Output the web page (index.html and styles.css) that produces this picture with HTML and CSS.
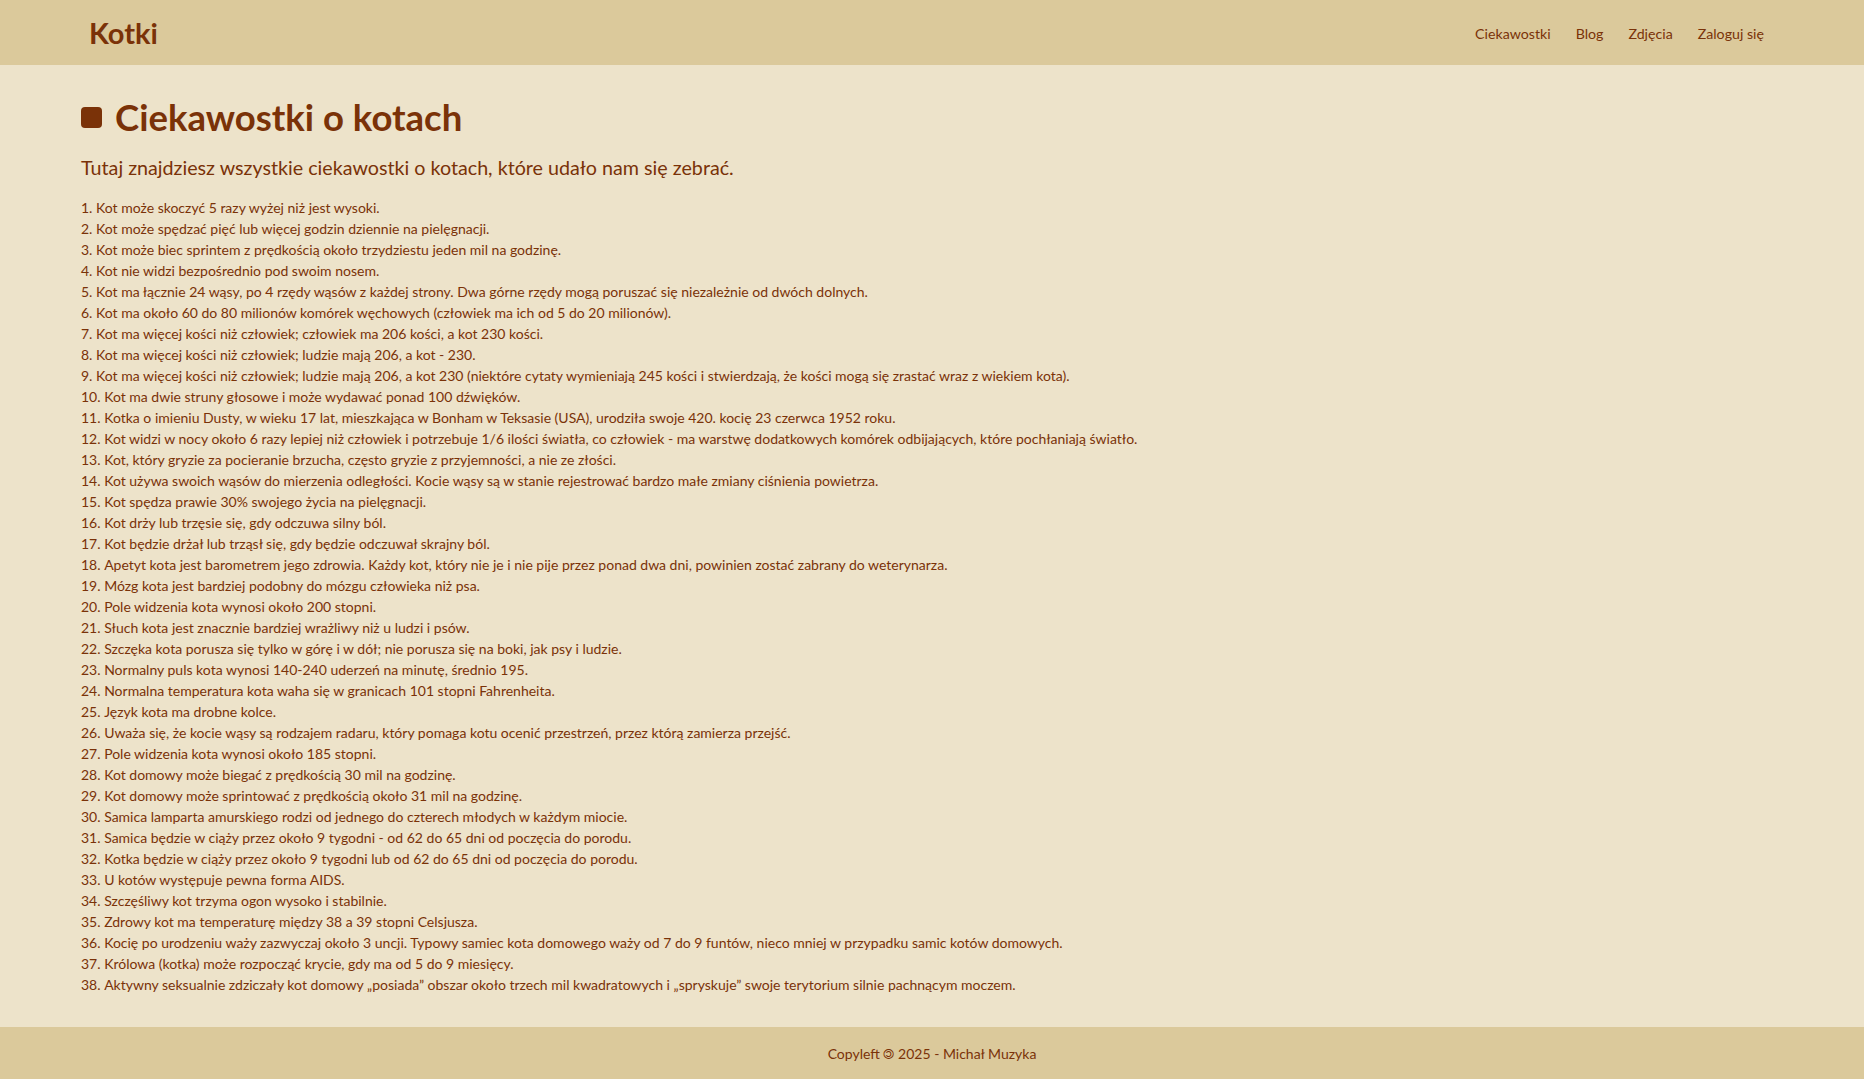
FILE: index.html
```html
<!DOCTYPE html>
<html lang="pl">
<head>
<meta charset="utf-8">
<title>Kotki - Ciekawostki</title>
<link rel="stylesheet" href="styles.css">
</head>
<body>
<div class="page">
  <header class="topbar">
    <a class="brand" href="#">Kotki</a>
    <nav class="nav">
      <a href="#">Ciekawostki</a>
      <a href="#">Blog</a>
      <a href="#">Zdjęcia</a>
      <a href="#">Zaloguj się</a>
    </nav>
  </header>
  <main class="content">
    <h1 class="title"><span class="title-mark"></span>Ciekawostki o kotach</h1>
    <p class="lead">Tutaj znajdziesz wszystkie ciekawostki o kotach, które udało nam się zebrać.</p>
    <ol class="facts">
      <li>Kot może skoczyć 5 razy wyżej niż jest wysoki.</li>
      <li>Kot może spędzać pięć lub więcej godzin dziennie na pielęgnacji.</li>
      <li>Kot może biec sprintem z prędkością około trzydziestu jeden mil na godzinę.</li>
      <li>Kot nie widzi bezpośrednio pod swoim nosem.</li>
      <li>Kot ma łącznie 24 wąsy, po 4 rzędy wąsów z każdej strony. Dwa górne rzędy mogą poruszać się niezależnie od dwóch dolnych.</li>
      <li>Kot ma około 60 do 80 milionów komórek węchowych (człowiek ma ich od 5 do 20 milionów).</li>
      <li>Kot ma więcej kości niż człowiek; człowiek ma 206 kości, a kot 230 kości.</li>
      <li>Kot ma więcej kości niż człowiek; ludzie mają 206, a kot - 230.</li>
      <li>Kot ma więcej kości niż człowiek; ludzie mają 206, a kot 230 (niektóre cytaty wymieniają 245 kości i stwierdzają, że kości mogą się zrastać wraz z wiekiem kota).</li>
      <li>Kot ma dwie struny głosowe i może wydawać ponad 100 dźwięków.</li>
      <li>Kotka o imieniu Dusty, w wieku 17 lat, mieszkająca w Bonham w Teksasie (USA), urodziła swoje 420. kocię 23 czerwca 1952 roku.</li>
      <li>Kot widzi w nocy około 6 razy lepiej niż człowiek i potrzebuje 1/6 ilości światła, co człowiek - ma warstwę dodatkowych komórek odbijających, które pochłaniają światło.</li>
      <li>Kot, który gryzie za pocieranie brzucha, często gryzie z przyjemności, a nie ze złości.</li>
      <li>Kot używa swoich wąsów do mierzenia odległości. Kocie wąsy są w stanie rejestrować bardzo małe zmiany ciśnienia powietrza.</li>
      <li>Kot spędza prawie 30% swojego życia na pielęgnacji.</li>
      <li>Kot drży lub trzęsie się, gdy odczuwa silny ból.</li>
      <li>Kot będzie drżał lub trząsł się, gdy będzie odczuwał skrajny ból.</li>
      <li>Apetyt kota jest barometrem jego zdrowia. Każdy kot, który nie je i nie pije przez ponad dwa dni, powinien zostać zabrany do weterynarza.</li>
      <li>Mózg kota jest bardziej podobny do mózgu człowieka niż psa.</li>
      <li>Pole widzenia kota wynosi około 200 stopni.</li>
      <li>Słuch kota jest znacznie bardziej wrażliwy niż u ludzi i psów.</li>
      <li>Szczęka kota porusza się tylko w górę i w dół; nie porusza się na boki, jak psy i ludzie.</li>
      <li>Normalny puls kota wynosi 140-240 uderzeń na minutę, średnio 195.</li>
      <li>Normalna temperatura kota waha się w granicach 101 stopni Fahrenheita.</li>
      <li>Język kota ma drobne kolce.</li>
      <li>Uważa się, że kocie wąsy są rodzajem radaru, który pomaga kotu ocenić przestrzeń, przez którą zamierza przejść.</li>
      <li>Pole widzenia kota wynosi około 185 stopni.</li>
      <li>Kot domowy może biegać z prędkością 30 mil na godzinę.</li>
      <li>Kot domowy może sprintować z prędkością około 31 mil na godzinę.</li>
      <li>Samica lamparta amurskiego rodzi od jednego do czterech młodych w każdym miocie.</li>
      <li>Samica będzie w ciąży przez około 9 tygodni - od 62 do 65 dni od poczęcia do porodu.</li>
      <li>Kotka będzie w ciąży przez około 9 tygodni lub od 62 do 65 dni od poczęcia do porodu.</li>
      <li>U kotów występuje pewna forma AIDS.</li>
      <li>Szczęśliwy kot trzyma ogon wysoko i stabilnie.</li>
      <li>Zdrowy kot ma temperaturę między 38 a 39 stopni Celsjusza.</li>
      <li>Kocię po urodzeniu waży zazwyczaj około 3 uncji. Typowy samiec kota domowego waży od 7 do 9 funtów, nieco mniej w przypadku samic kotów domowych.</li>
      <li>Królowa (kotka) może rozpocząć krycie, gdy ma od 5 do 9 miesięcy.</li>
      <li>Aktywny seksualnie zdziczały kot domowy „posiada” obszar około trzech mil kwadratowych i „spryskuje” swoje terytorium silnie pachnącym moczem.</li>
    </ol>
  </main>
  <footer class="footer">Copyleft 🄯 2025 - Michał Muzyka</footer>
</div>
</body>
</html>
```
FILE: styles.css
```css
html, body {
  margin: 0;
  padding: 0;
}
body {
  background: #ede3ca;
  color: #7a3208;
  font-family: Lato, "Noto Sans", "DejaVu Sans", sans-serif;
}
.page {
  min-height: 100vh;
  display: flex;
  flex-direction: column;
}
a {
  color: inherit;
  text-decoration: none;
}
.topbar {
  height: 65px;
  box-sizing: border-box;
  background: #dbc99b;
  display: flex;
  align-items: center;
  justify-content: space-between;
  padding: 1px 100px 0 89px;
  flex: none;
}
.brand {
  font-size: 29px;
  font-weight: 700;
  line-height: 1.2;
  color: #7a3208;
  padding-top: 1px;
}
.nav {
  display: flex;
  gap: 25px;
  font-size: 14.2px;
  line-height: 21px;
}
.content {
  flex: 1;
  padding: 31px 81px 31px;
}
.title {
  margin: 0;
  display: flex;
  align-items: center;
  gap: 13px;
  font-size: 36.5px;
  line-height: 1.2;
  font-weight: 700;
  color: #7a3208;
}
.title-mark {
  width: 21px;
  height: 21px;
  border-radius: 4px;
  background: #7a3208;
  flex: none;
}
.lead {
  margin: 16.4px 0 0;
  font-size: 19.7px;
  line-height: 1.2;
}
.facts {
  margin: 17.4px 0 0;
  padding: 0;
  list-style-position: inside;
  font-size: 14px;
  line-height: 21px;
}
.footer {
  height: 52px;
  box-sizing: border-box;
  background: #dbc99b;
  padding-top: 16px;
  text-align: center;
  font-size: 14px;
  line-height: 21px;
  flex: none;
}
```
